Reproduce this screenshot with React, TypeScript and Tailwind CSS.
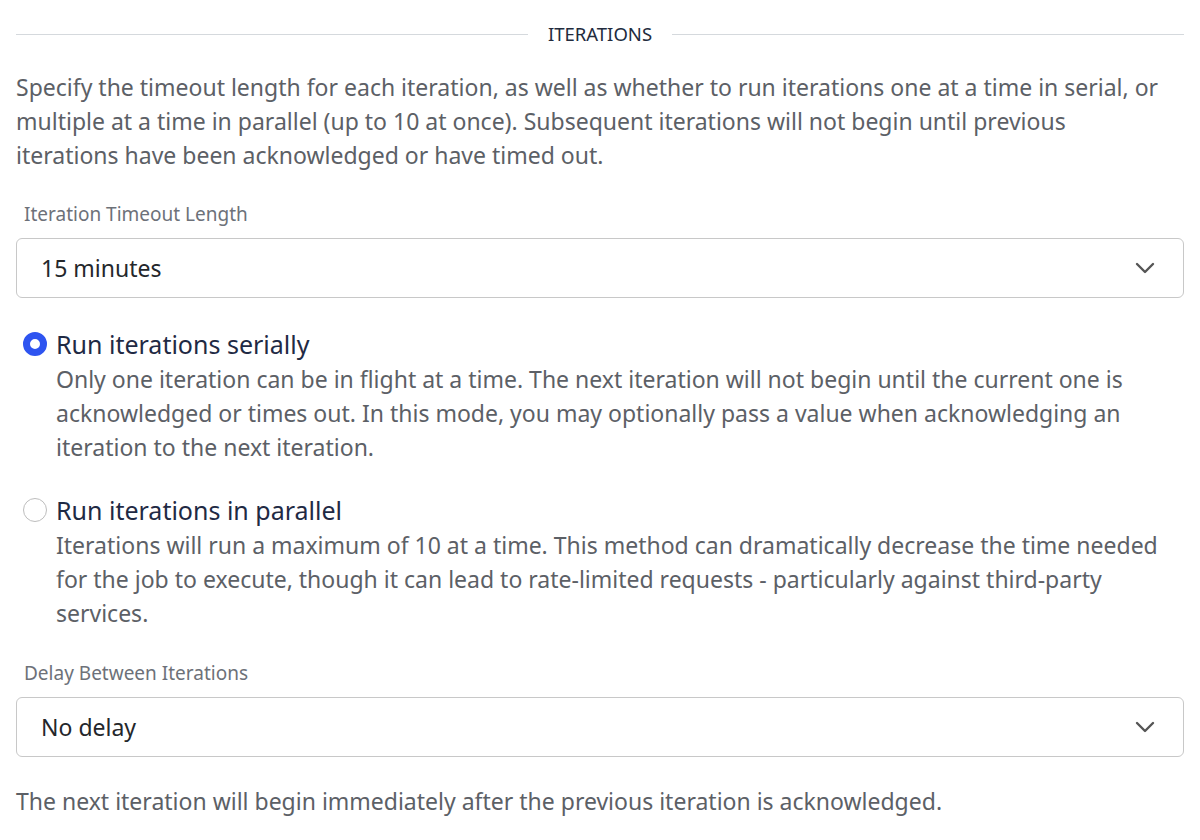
type Option = {
  id: string;
  title: string;
  description: string;
};

const options: Option[] = [
  {
    id: "serial",
    title: "Run iterations serially",
    description:
      "Only one iteration can be in flight at a time. The next iteration will not begin until the current one is acknowledged or times out. In this mode, you may optionally pass a value when acknowledging an iteration to the next iteration.",
  },
  {
    id: "parallel",
    title: "Run iterations in parallel",
    description:
      "Iterations will run a maximum of 10 at a time. This method can dramatically decrease the time needed for the job to execute, though it can lead to rate-limited requests - particularly against third-party services.",
  },
];

function Chevron() {
  return (
    <svg width="20" height="12" viewBox="0 0 20 12" fill="none" className="shrink-0">
      <path
        d="M2 2 L10 10 L18 2"
        stroke="#555"
        strokeWidth="2.4"
        strokeLinecap="round"
        strokeLinejoin="round"
      />
    </svg>
  );
}

function Select({ value }: { value: string }) {
  return (
    <div className="flex h-[60px] items-center justify-between rounded-[6px] border border-[#c8c8c8] bg-white pl-6 pr-7">
      <span className="text-[23px] leading-[34px] text-[#24272b]">{value}</span>
      <Chevron />
    </div>
  );
}

function Radio({ checked }: { checked: boolean }) {
  return checked ? (
    <span className="mt-[5px] h-[24px] w-[24px] shrink-0 rounded-full border-[7px] border-[#2e54f0] bg-white" />
  ) : (
    <span className="mt-[5px] h-[24px] w-[24px] shrink-0 rounded-full border-[1.5px] border-[#bdbdbd] bg-white" />
  );
}

export default function App() {
  const selected = "serial";

  return (
    <div
      className="min-h-screen w-full bg-white px-4 pb-6"
      style={{ fontFamily: '"Noto Sans", "Open Sans", sans-serif' }}
    >
      <div className="flex items-center gap-5 pt-[22px]">
        <div className="h-px flex-1 bg-[#d5d9dd]" />
        <span className="text-[18.5px] leading-[24px] text-[#222b3d]">ITERATIONS</span>
        <div className="h-px flex-1 bg-[#d5d9dd]" />
      </div>

      <p className="mt-[24px] max-w-[1158px] text-[23px] leading-[34px] text-[#5c6066]">
        Specify the timeout length for each iteration, as well as whether to run iterations one at a time in serial, or multiple at a time in parallel (up to 10 at once). Subsequent iterations will not begin until previous iterations have been acknowledged or have timed out.
      </p>

      <label className="mt-[30px] block pl-2 text-[19px] leading-[24px] text-[#6d7179]">
        Iteration Timeout Length
      </label>
      <div className="mt-3">
        <Select value="15 minutes" />
      </div>

      <div className="mt-[29px] flex flex-col gap-[29px]">
        {options.map((o) => (
          <div key={o.id} className="flex gap-[9px] pl-[7px]">
            <Radio checked={o.id === selected} />
            <div>
              <div className="text-[25px] leading-[34px] text-[#1f2a44]">{o.title}</div>
              <p className="mt-[1px] text-[23px] leading-[34px] text-[#5c6066]">
                {o.description}
              </p>
            </div>
          </div>
        ))}
      </div>

      <label className="mt-[31px] block pl-2 text-[19px] leading-[24px] text-[#6d7179]">
        Delay Between Iterations
      </label>
      <div className="mt-3">
        <Select value="No delay" />
      </div>

      <p className="mt-[27px] text-[23px] leading-[34px] text-[#5c6066]">
        The next iteration will begin immediately after the previous iteration is acknowledged.
      </p>
    </div>
  );
}
